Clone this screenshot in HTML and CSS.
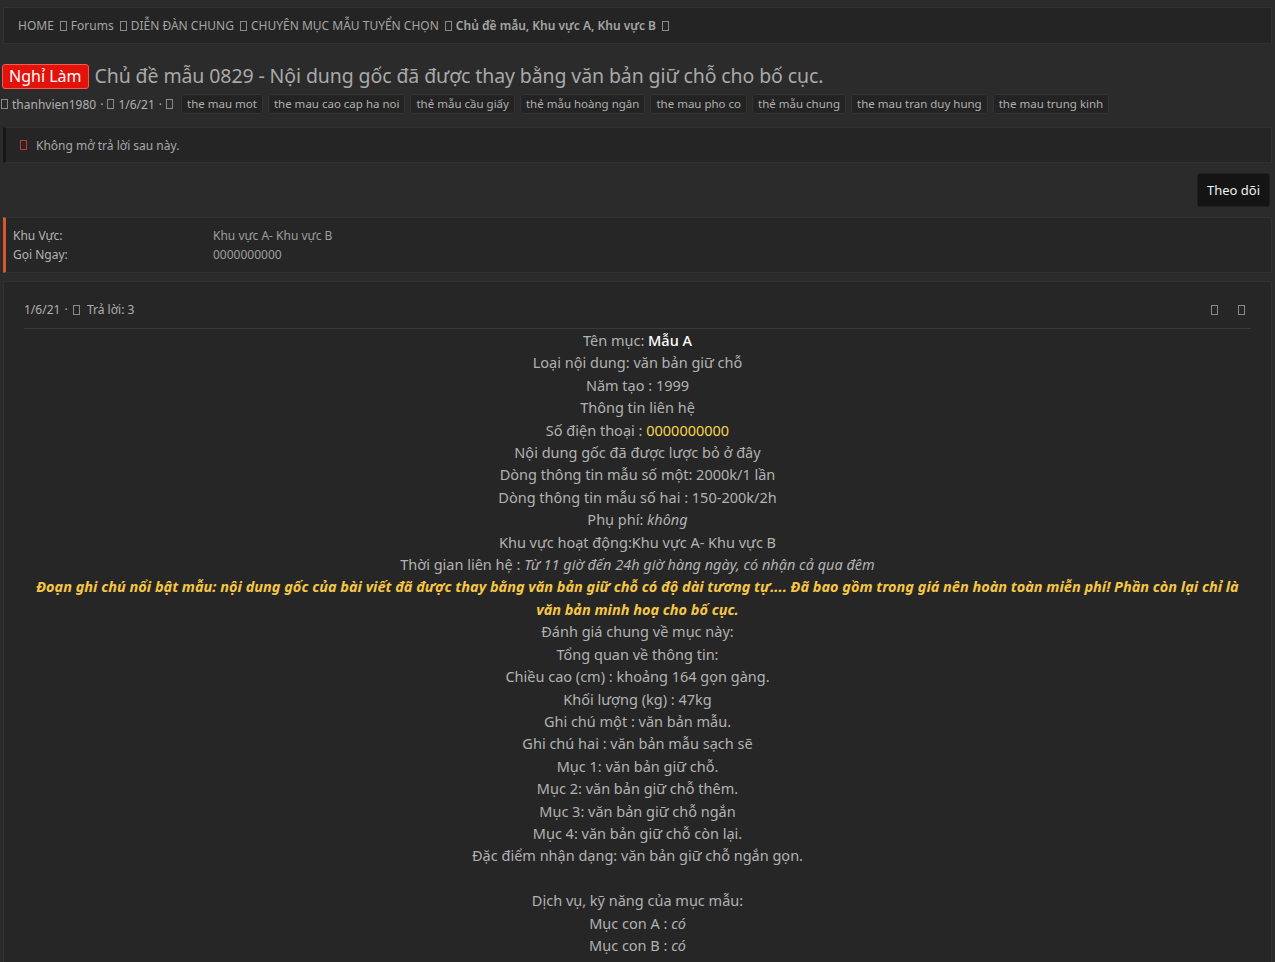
FILE: index.html
```html
<!DOCTYPE html>
<html lang="vi">
<head>
  <meta charset="UTF-8">
  <meta name="viewport" content="width=device-width, initial-scale=1.0">
  <title>Chủ đề mẫu</title>
  <link rel="stylesheet" href="styles.css">
</head>
<body>
  <div class="page">
    <!-- breadcrumb -->
    <nav class="crumbs">
      <span>HOME</span>
      <i class="fa"></i><span>Forums</span>
      <i class="fa"></i><span>DIỄN ĐÀN CHUNG</span>
      <i class="fa"></i><span>CHUYÊN MỤC MẪU TUYỂN CHỌN</span>
      <i class="fa"></i><b>Chủ đề mẫu, Khu vực A, Khu vực B</b>
      <i class="fa"></i>
    </nav>

    <div class="title-row">
      <span class="prefix">Nghỉ Làm</span>
      <h1>Chủ đề mẫu 0829 - Nội dung gốc đã được thay bằng văn bản giữ chỗ cho bố cục.</h1>
    </div>

    <div class="meta">
      <i class="fa"></i> <span>thanhvien1980</span> <span class="dot">·</span>
      <i class="fa"></i> <span>1/6/21</span> <span class="dot">·</span>
      <i class="fa"></i>
      <ul class="tags">
        <li>the mau mot</li>
        <li>the mau cao cap ha noi</li>
        <li>thẻ mẫu cầu giấy</li>
        <li>thẻ mẫu hoàng ngân</li>
        <li>the mau pho co</li>
        <li>thẻ mẫu chung</li>
        <li>the mau tran duy hung</li>
        <li>the mau trung kinh</li>
      </ul>
    </div>

    <div class="notice">
      <i class="fa red"></i> Không mở trả lời sau này.
    </div>

    <div class="actions">
      <button class="btn">Theo dõi</button>
    </div>

    <dl class="fields">
      <dt>Khu Vực:</dt><dd>Khu vực A- Khu vực B</dd>
      <dt>Gọi Ngay:</dt><dd>0000000000</dd>
    </dl>

    <article class="post">
      <header class="post-head">
        <div><span>1/6/21</span> <span class="dot">·</span> <i class="fa"></i> Trả lời: 3</div>
        <div class="post-tools"><i class="fa"></i><i class="fa"></i></div>
      </header>
      <div class="post-body">
        <p>Tên mục: <b class="hl">Mẫu A</b></p>
        <p>Loại nội dung: văn bản giữ chỗ</p>
        <p>Năm tạo : 1999</p>
        <p>Thông tin liên hệ</p>
        <p>Số điện thoại : <span class="phone">0000000000</span></p>
        <p>Nội dung gốc đã được lược bỏ ở đây</p>
        <p>Dòng thông tin mẫu số một: 2000k/1 lần</p>
        <p>Dòng thông tin mẫu số hai : 150-200k/2h</p>
        <p>Phụ phí: <em>không</em></p>
        <p>Khu vực hoạt động:Khu vực A- Khu vực B</p>
        <p>Thời gian liên hệ : <em>Từ 11 giờ đến 24h giờ hàng ngày, có nhận cả qua đêm</em></p>
        <p class="note">Đoạn ghi chú nổi bật mẫu: nội dung gốc của bài viết đã được thay bằng văn bản giữ chỗ có độ dài tương tự.... Đã bao gồm trong giá nên hoàn toàn miễn phí! Phần còn lại chỉ là văn bản minh hoạ cho bố cục.</p>
        <p>Đánh giá chung về mục này:</p>
        <p>Tổng quan về thông tin:</p>
        <p>Chiều cao (cm) : khoảng 164 gọn gàng.</p>
        <p>Khối lượng (kg) : 47kg</p>
        <p>Ghi chú một : văn bản mẫu.</p>
        <p>Ghi chú hai : văn bản mẫu sạch sẽ</p>
        <p>Mục 1: văn bản giữ chỗ.</p>
        <p>Mục 2: văn bản giữ chỗ thêm.</p>
        <p>Mục 3: văn bản giữ chỗ ngắn</p>
        <p>Mục 4: văn bản giữ chỗ còn lại.</p>
        <p>Đặc điểm nhận dạng: văn bản giữ chỗ ngắn gọn.</p>
        <p>&nbsp;</p>
        <p>Dịch vụ, kỹ năng của mục mẫu:</p>
        <p>Mục con A : <em>có</em></p>
        <p>Mục con B : <em>có</em></p>
        <p>Mục con C : <em>có</em></p>
      </div>
    </article>
  </div>
</body>
</html>
```

FILE: styles.css
```css
body {
  margin: 0;
  background: #2b2b2b;
  color: #b4b4b4;
  font-family: "Noto Sans", "Open Sans", sans-serif;
  font-size: 13px;
  overflow: hidden;
}

.page {
  padding: 7px 3px 0 3px;
}

.fa {
  display: inline-block;
  width: 5px;
  height: 8px;
  border: 1px solid #8a8a8a;
  margin: 0 4px 0 1px;
  vertical-align: -1px;
}
.fa.red {
  border-color: #c0392b;
}

.dot {
  margin: 0 1px;
}

/* breadcrumb */
.crumbs {
  display: flex;
  align-items: center;
  height: 35px;
  padding: 0 14px;
  background: #242424;
  border: 1px solid #313131;
  font-size: 12px;
  color: #a5a5a5;
}
.crumbs span,
.crumbs b {
  margin-right: 5px;
}
.crumbs b {
  font-weight: 600;
}

/* title */
.title-row {
  display: flex;
  align-items: center;
  margin-top: 19px;
}
.prefix {
  background: #e3120b;
  color: #fff;
  border: 1px solid #f25b4f;
  border-radius: 3px;
  font-size: 16px;
  padding: 0 6px;
  height: 23px;
  line-height: 22px;
  margin-left: -1px;
  margin-right: 6px;
}
h1 {
  margin: 0;
  font-size: 19.5px;
  line-height: 26px;
  font-weight: 400;
  color: #a9a9a9;
  letter-spacing: -0.1px;
}

.meta {
  display: flex;
  align-items: center;
  margin-top: 5px;
  font-size: 12px;
  color: #b0b0b0;
  margin-left: -3px;
}
.meta span {
  margin-right: 3px;
}
.tags {
  display: flex;
  gap: 5px;
  list-style: none;
  margin: 0 0 0 4px;
  padding: 0;
}
.tags li {
  background: #232323;
  border: 1px solid #333;
  border-radius: 3px;
  padding: 0 5px;
  height: 18px;
  line-height: 18px;
  font-size: 11.5px;
  color: #b0b0b0;
}

/* notice */
.notice {
  margin-top: 13px;
  height: 34px;
  display: flex;
  align-items: center;
  padding-left: 13px;
  background: #252525;
  border: 1px solid #303030;
  border-left: 3px solid #161616;
  font-size: 12px;
  color: #a8a8a8;
}
.notice .fa {
  margin-right: 9px;
}

.actions {
  display: flex;
  justify-content: flex-end;
  margin-top: 10px;
  padding-right: 2px;
}
.btn {
  background: #141414;
  color: #f0f0f0;
  border: 1px solid #202020;
  border-radius: 3px;
  font-family: inherit;
  font-size: 13px;
  height: 34px;
  padding: 0 9px;
}

/* custom fields */
.fields {
  display: grid;
  grid-template-columns: 200px 1fr;
  margin: 10px 0 0 0;
  padding: 8px 7px 8px;
  background: #262626;
  border: 1px solid #313131;
  border-left: 3px solid #d9562f;
  font-size: 12px;
  line-height: 19px;
}
.fields dt {
  color: #b4b4b4;
}
.fields dd {
  margin: 0;
  color: #9e9e9e;
}

/* post */
.post {
  margin-top: 8px;
  background: #262626;
  border: 1px solid #313131;
  padding: 0 20px;
}
.post-head {
  display: flex;
  justify-content: space-between;
  align-items: center;
  margin-top: 19px;
  padding-bottom: 10px;
  border-bottom: 1px solid #3a3a3a;
  font-size: 12px;
  color: #b0b0b0;
}
.post-tools {
  display: flex;
  gap: 20px;
  padding-right: 6px;
}
.post-tools .fa {
  margin: 0;
}

.post-body {
  padding-top: 0;
  text-align: center;
  font-size: 14.5px;
  line-height: 22.4px;
  color: #b2b2b2;
}
.post-body p {
  margin: 0;
}
.post-body .hl {
  color: #ffffff;
  font-weight: 500;
}
.post-body .phone {
  color: #f7d54a;
}
.post-body .note {
  color: #f6c744;
  font-weight: 700;
  font-style: italic;
  padding: 0 6px;
}
```
